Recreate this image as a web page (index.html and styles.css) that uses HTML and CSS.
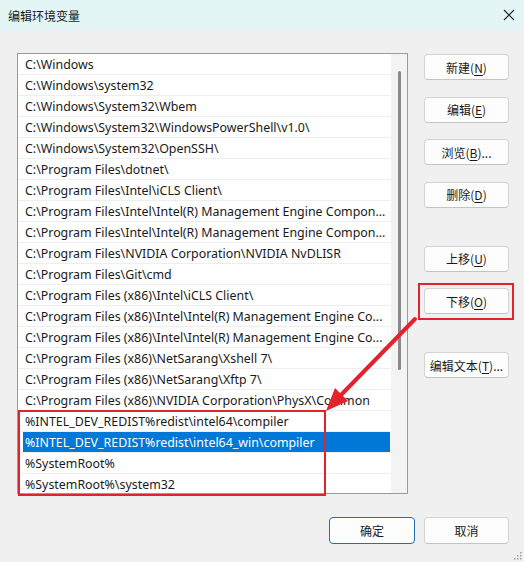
FILE: index.html
```html
<!DOCTYPE html>
<html lang="zh-CN">
<head>
  <meta charset="UTF-8" />
  <title>编辑环境变量</title>
  <meta name="viewport" content="width=device-width, initial-scale=1.0" />
  <link rel="stylesheet" href="styles.css">
</head>
<body>

  <div class="window">
    <!-- TITLE BAR -->
    <div class="titlebar">
      <span class="title">编辑环境变量</span>
      <svg class="close" width="12" height="12" viewBox="0 0 12 12">
        <path d="M1 1 L11 11 M11 1 L1 11" stroke="#1f1f1f" stroke-width="1.1" fill="none" />
      </svg>
    </div>

    <div class="content">
      <div class="main">
        <!-- PATH LIST -->
        <div class="listbox">
          <ul class="items">
            <li><span class="label">C:\Windows</span></li>
            <li><span class="label">C:\Windows\system32</span></li>
            <li><span class="label">C:\Windows\System32\Wbem</span></li>
            <li><span class="label">C:\Windows\System32\WindowsPowerShell\v1.0\</span></li>
            <li><span class="label">C:\Windows\System32\OpenSSH\</span></li>
            <li><span class="label">C:\Program Files\dotnet\</span></li>
            <li><span class="label">C:\Program Files\Intel\iCLS Client\</span></li>
            <li><span class="label">C:\Program Files\Intel\Intel(R) Management Engine Compon...</span></li>
            <li><span class="label">C:\Program Files\Intel\Intel(R) Management Engine Compon...</span></li>
            <li><span class="label">C:\Program Files\NVIDIA Corporation\NVIDIA NvDLISR</span></li>
            <li><span class="label">C:\Program Files\Git\cmd</span></li>
            <li><span class="label">C:\Program Files (x86)\Intel\iCLS Client\</span></li>
            <li><span class="label">C:\Program Files (x86)\Intel\Intel(R) Management Engine Co...</span></li>
            <li><span class="label">C:\Program Files (x86)\Intel\Intel(R) Management Engine Co...</span></li>
            <li><span class="label">C:\Program Files (x86)\NetSarang\Xshell 7\</span></li>
            <li><span class="label">C:\Program Files (x86)\NetSarang\Xftp 7\</span></li>
            <li><span class="label">C:\Program Files (x86)\NVIDIA Corporation\PhysX\Common</span></li>
            <li><span class="label">%INTEL_DEV_REDIST%redist\intel64\compiler</span></li>
            <li class="selected"><span class="label">%INTEL_DEV_REDIST%redist\intel64_win\compiler</span></li>
            <li><span class="label">%SystemRoot%</span></li>
            <li><span class="label">%SystemRoot%\system32</span></li>
          </ul>
          <div class="scrollbar"><div class="thumb"></div></div>
        </div>

        <!-- SIDE BUTTONS -->
        <div class="side-buttons">
          <button class="btn">新建(<u>N</u>)</button>
          <button class="btn">编辑(<u>E</u>)</button>
          <button class="btn">浏览(<u>B</u>)...</button>
          <button class="btn">删除(<u>D</u>)</button>
          <button class="btn group">上移(<u>U</u>)</button>
          <button class="btn">下移(<u>O</u>)</button>
          <button class="btn group">编辑文本(<u>T</u>)...</button>
        </div>
      </div>

      <!-- FOOTER -->
      <div class="footer">
        <button class="btn default">确定</button>
        <button class="btn">取消</button>
      </div>
    </div>

    <!-- ANNOTATIONS -->
    <div class="mark mark-button"></div>
    <div class="mark mark-rows"></div>
    <svg class="arrow" width="524" height="562" viewBox="0 0 524 562">
      <line x1="415" y1="319" x2="341" y2="395" stroke="#e4222c" stroke-width="4" stroke-linecap="round" />
      <polygon points="326,411 348,401 335,388" fill="#e4222c" />
    </svg>

    <!-- resize grip -->
    <svg class="grip" width="10" height="10" viewBox="0 0 10 10">
      <rect x="8" y="2" width="1.5" height="1.5" fill="#a0a0a0" />
      <rect x="5" y="5" width="1.5" height="1.5" fill="#a0a0a0" />
      <rect x="8" y="5" width="1.5" height="1.5" fill="#a0a0a0" />
      <rect x="2" y="8" width="1.5" height="1.5" fill="#a0a0a0" />
      <rect x="5" y="8" width="1.5" height="1.5" fill="#a0a0a0" />
      <rect x="8" y="8" width="1.5" height="1.5" fill="#a0a0a0" />
    </svg>
  </div>

</body>
</html>
```

FILE: styles.css
```css
/* ---------------------------------------------
   GENERAL / RESET
--------------------------------------------- */
* {
  margin: 0;
  padding: 0;
  box-sizing: border-box;
}

body {
  font-family: "Noto Sans", "Noto Sans CJK SC", sans-serif;
  background: #f0f0f0;
}

.window {
  position: relative;
  width: 524px;
  height: 562px;
  background: #f0f0f0;
  overflow: hidden;
}

/* ---------------------------------------------
   TITLE BAR
--------------------------------------------- */
.titlebar {
  height: 30px;
  background: #e3f5f5;
  display: flex;
  align-items: center;
  justify-content: space-between;
  padding: 0 9px 0 8px;
}
.title {
  font-family: "Noto Sans CJK SC", sans-serif;
  font-size: 12px;
  color: #1a1a1a;
}

/* ---------------------------------------------
   CONTENT
--------------------------------------------- */
.content {
  padding: 23px 15px 0 17px;
}
.main {
  display: flex;
  gap: 16px;
}

/* List of paths */
.listbox {
  width: 391px;
  height: 441px;
  border: 1px solid #9a9a9a;
  background: #ffffff;
  display: flex;
  overflow: hidden;
}
.items {
  list-style: none;
  flex: 1;
  min-width: 0;
}
.items li {
  height: 21px;
  border-bottom: 1px solid #eeeeee;
  padding: 0 1px 0 5px;
}
.label {
  display: block;
  height: 20px;
  line-height: 21px;
  padding-left: 2px;
  font-size: 12.4px;
  color: #1a1a1a;
  white-space: nowrap;
  overflow: hidden;
}
.items li.selected .label {
  background: #0078d7;
  color: #ffffff;
}

.scrollbar {
  width: 16px;
  background: #f3f3f3;
  display: flex;
  justify-content: center;
}
.thumb {
  width: 3px;
  height: 299px;
  margin-top: 17px;
  margin-left: 1px;
  border-radius: 2px;
  background: #8a8a8a;
}

/* Buttons */
.btn {
  height: 26px;
  width: 85px;
  padding: 0;
  background: #fdfdfd;
  border: 1px solid #d4d4d4;
  border-bottom-color: #c4c4c4;
  border-radius: 4px;
  font-family: "Noto Sans CJK SC", sans-serif;
  font-size: 12px;
  color: #1a1a1a;
  white-space: nowrap;
}
.btn u {
  text-underline-offset: 2px;
}

.side-buttons {
  display: flex;
  flex-direction: column;
  gap: 16.5px;
  padding-top: 1px;
}
.side-buttons .group {
  margin-top: 21.5px;
}

.footer {
  display: flex;
  justify-content: flex-end;
  gap: 9px;
  margin-top: 23px;
}
.footer .btn {
  height: 27px;
}
.btn.default {
  width: 86px;
  border: 1px solid #1f6fb5;
}

/* ---------------------------------------------
   ANNOTATIONS (drawn over the dialog)
--------------------------------------------- */
.mark {
  position: absolute;
  border: 2.5px solid #e0232d;
}
.mark-button {
  left: 418px;
  top: 283px;
  width: 96px;
  height: 37px;
}
.mark-rows {
  left: 18px;
  top: 410px;
  width: 308px;
  height: 86px;
}
.arrow {
  position: absolute;
  left: 0;
  top: 0;
  pointer-events: none;
}
.grip {
  position: absolute;
  right: 2px;
  bottom: 2px;
}
```
